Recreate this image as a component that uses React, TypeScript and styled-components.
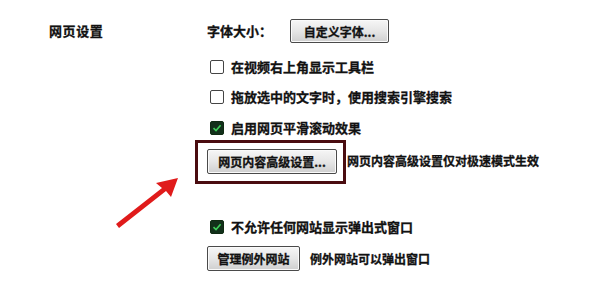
import React from "react";
import styled, { createGlobalStyle } from "styled-components";

const Global = createGlobalStyle`
  html, body { margin: 0; padding: 0; background: #fff; }
  body { font-family: "Noto Sans CJK SC", "Noto Sans", sans-serif; color: #111; }
`;

const Page = styled.div`
  position: relative;
  width: 600px;
  height: 282px;
  overflow: hidden;
  background: #fff;
`;

const Section = styled.div`
  display: grid;
  grid-template-columns: 158px 1fr;
  padding: 19px 0 0 49px;
`;

const SectionTitle = styled.div`
  font-size: 13px;
  font-weight: 700;
  line-height: 24px;
  height: 24px;
  letter-spacing: 0.6px;
  -webkit-text-stroke: 0.3px #111;
`;

const Content = styled.div`
  display: flex;
  flex-direction: column;
  align-items: flex-start;
`;

const Row = styled.div<{ $mt?: number }>`
  display: flex;
  align-items: center;
  margin-top: ${(p) => p.$mt ?? 0}px;
`;

const Label = styled.span<{ $size?: number; $ml?: number }>`
  font-size: ${(p) => p.$size ?? 13}px;
  font-weight: 700;
  white-space: nowrap;
  margin-left: ${(p) => p.$ml ?? 0}px;
  line-height: 20px;
  -webkit-text-stroke: 0.3px #111;
`;

const Button = styled.button<{ $w: number; $h?: number; $ml?: number }>`
  width: ${(p) => p.$w}px;
  height: ${(p) => p.$h ?? 25}px;
  margin-left: ${(p) => p.$ml ?? 0}px;
  padding: 0;
  border: 1px solid #4a4a4a;
  border-radius: 2px;
  background: linear-gradient(#f6f6f6 0%, #e6e6e6 50%, #cfcfcf 100%);
  box-shadow: inset 0 0 0 1px #fafafa;
  font-family: inherit;
  font-size: 12px;
  font-weight: 700;
  color: #111;
  white-space: nowrap;
  -webkit-text-stroke: 0.3px #111;
`;

const CheckRow = styled.label<{ $mt: number }>`
  display: flex;
  align-items: center;
  height: 20px;
  margin-top: ${(p) => p.$mt}px;
  padding-left: 3px;
`;

const Box = styled.span<{ $checked?: boolean }>`
  box-sizing: border-box;
  width: 14px;
  height: 14px;
  border-radius: 2px;
  border: 1px solid ${(p) => (p.$checked ? "#0f2a12" : "#444")};
  background: ${(p) => (p.$checked ? "#12301a" : "#fff")};
  display: flex;
  align-items: center;
  justify-content: center;
  margin-right: 7px;
  flex: none;
`;

const Highlight = styled.div`
  margin-left: -12px;
  margin-top: 2px;
  border: 3px solid #4a0c10;
  padding: 5px 6px 7px 9px;
`;

const Arrow = styled.svg`
  position: absolute;
  left: 0;
  top: 0;
  pointer-events: none;
`;

const Check = () => (
  <svg width="10" height="10" viewBox="0 0 10 10">
    <path d="M1.5 5.2 L4 7.6 L8.6 2.2" fill="none" stroke="#3fcf5a" strokeWidth="1.6" />
  </svg>
);

export default function App() {
  return (
    <Page>
      <Global />
      <Section>
        <SectionTitle>网页设置</SectionTitle>
        <Content>
          <Row>
            <Label>字体大小：</Label>
            <Button $w={99} $h={24} $ml={18}>自定义字体...</Button>
          </Row>
          <CheckRow $mt={14}>
            <Box />
            <Label>在视频右上角显示工具栏</Label>
          </CheckRow>
          <CheckRow $mt={10}>
            <Box />
            <Label>拖放选中的文字时，使用搜索引擎搜索</Label>
          </CheckRow>
          <CheckRow $mt={11}>
            <Box $checked>
              <Check />
            </Box>
            <Label>启用网页平滑滚动效果</Label>
          </CheckRow>
          <Row>
            <Highlight>
              <Button $w={130}>网页内容高级设置...</Button>
            </Highlight>
            <Label $size={12} $ml={1}>网页内容高级设置仅对极速模式生效</Label>
          </Row>
          <CheckRow $mt={33}>
            <Box $checked>
              <Check />
            </Box>
            <Label>不允许任何网站显示弹出式窗口</Label>
          </CheckRow>
          <Row $mt={9}>
            <Button $w={93}>管理例外网站</Button>
            <Label $size={12} $ml={10}>例外网站可以弹出窗口</Label>
          </Row>
        </Content>
      </Section>
      <Arrow width="600" height="282" viewBox="0 0 600 282">
        <path d="M116 224 L119 228 L166 191 L171 197 L178 178 L156 183 L162 188 Z" fill="#e01b1b" />
      </Arrow>
    </Page>
  );
}
